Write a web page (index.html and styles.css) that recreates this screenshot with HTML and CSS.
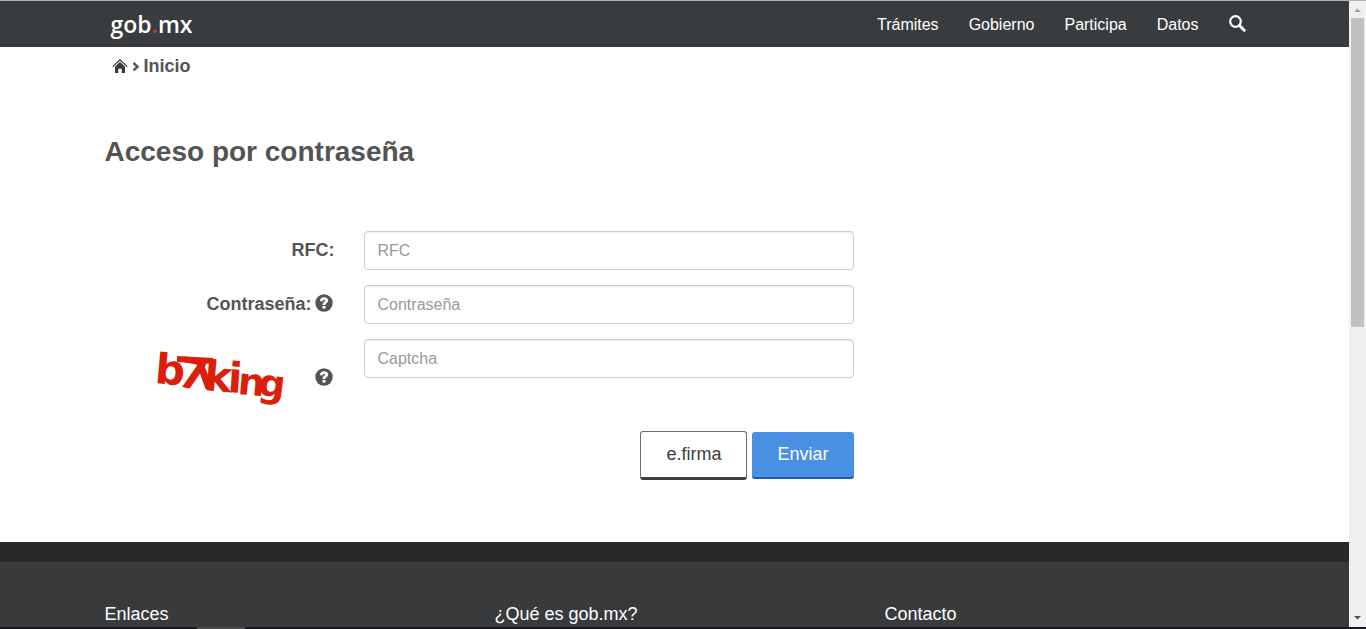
FILE: index.html
```
<!DOCTYPE html>
<html lang="es">
<head>
  <meta charset="UTF-8">
  <meta name="viewport" content="width=device-width, initial-scale=1.0">
  <title>Acceso por contraseña</title>
  <link rel="stylesheet" href="styles.css">
</head>
<body>
  <svg class="sprite">
    <symbol id="icon-help" viewBox="0 0 18 18">
      <circle cx="9" cy="9" r="8.700" fill="#545454"/>
      <path d="M5 7.200C5 4.600 6.600 3.300 9.100 3.300c2.400 0 4.100 1.300 4.100 3.300 0 2.500-2.700 2.600-2.700 4.300H7.500c0-2.600 2.400-2.900 2.400-4.200 0-.6-.4-.9-1-.9-.7 0-1 .5-1 1.400z" fill="#fff"/>
      <path d="M7.500 12h3v2.600h-3z" fill="#fff"/>
    </symbol>
  </svg>

  <div class="window">
    <div class="page">
      <header class="topbar">
        <div class="container topbar-inner">
          <a class="logo" href="#">gob<span class="logo-dot">.</span>mx</a>
          <nav class="topnav">
            <a href="#">Trámites</a>
            <a href="#">Gobierno</a>
            <a href="#">Participa</a>
            <a href="#">Datos</a>
            <a class="search" href="#" aria-label="Buscar">
              <svg width="17" height="17" viewBox="0 0 17 17">
                <circle cx="6.500" cy="6.500" r="5.300" fill="none" stroke="#fff" stroke-width="2.200"/>
                <path d="M10.500 10.500l4.700 4.700" stroke="#fff" stroke-width="3" stroke-linecap="round"/>
              </svg>
            </a>
          </nav>
        </div>
      </header>

      <main class="container content">
        <div class="breadcrumb">
          <a href="#" aria-label="Portada">
            <svg width="16" height="15" viewBox="0 0 16 15">
              <path d="M.8 7.600L8 .9l7.200 6.700" fill="none" stroke="#393c3e" stroke-width="1.200"/>
              <path d="M8 2.800l5 4.900V14h-3.300v-4.200H6.300V14H3V7.700z" fill="#393c3e"/>
            </svg>
          </a>
          <svg width="8" height="10" viewBox="0 0 8 10">
            <path d="M1.500 2L5.500 5.700 1.500 9.400" fill="none" stroke="#545454" stroke-width="2.400"/>
          </svg>
          <a href="#">Inicio</a>
        </div>

        <h1>Acceso por contraseña</h1>

        <form class="login">
          <div class="form-group">
            <div class="label-col"><label for="rfc">RFC:</label></div>
            <input id="rfc" type="text" placeholder="RFC">
          </div>
          <div class="form-group">
            <div class="label-col">
              <label for="password">Contraseña:</label>
              <svg class="help"><use href="#icon-help"/></svg>
            </div>
            <input id="password" type="password" placeholder="Contraseña">
          </div>
          <div class="form-group captcha-group">
            <div class="label-col captcha-col">
              <label for="captcha" aria-label="Captcha">
                <svg class="captcha" viewBox="0 4 150 70">
                  <text x="9 31 58 82 92 112" y="43 46 50 52 54 55" rotate="5 10 5 4 5 7"><tspan class="tall">b7ki</tspan>ng</text>
                  <!-- trazos que unen el 7 con la k -->
                  <path d="M32 19L68 21" stroke="#dc1f0c" stroke-width="6"/>
                  <path d="M54 21L64 48" stroke="#dc1f0c" stroke-width="7"/>
                </svg>
              </label>
              <svg class="help"><use href="#icon-help"/></svg>
            </div>
            <input id="captcha" type="text" placeholder="Captcha">
          </div>
          <div class="actions">
            <button class="btn btn-default" type="button">e.firma</button>
            <button class="btn btn-primary" type="submit">Enviar</button>
          </div>
        </form>
      </main>

      <footer class="footer">
        <div class="container footer-inner">
          <h2>Enlaces</h2>
          <h2>¿Qué es gob.mx?</h2>
          <h2>Contacto</h2>
        </div>
      </footer>
    </div>

    <div class="scrollbar">
      <svg width="17" height="17" viewBox="0 0 17 17"><path d="M5 11h7L8.500 7.500z" fill="#a3a3a3"/></svg>
      <div class="scrollbar-thumb"></div>
      <div class="scrollbar-rest"></div>
      <svg width="17" height="17" viewBox="0 0 17 17"><path d="M5 6h7L8.500 9.500z" fill="#505050"/></svg>
    </div>
  </div>
  <div class="taskbar"><div class="taskbar-item"></div></div>
</body>
</html>
```
FILE: styles.css
```
* {
  box-sizing: border-box;
}

body {
  margin: 0;
  height: 100vh;
  display: flex;
  flex-direction: column;
  overflow: hidden;
  border-top: 1px solid #b0b2b3;
  background: #fff;
  color: #545454;
  font-family: Arial, "Liberation Sans", sans-serif;
  font-size: 18px;
}

a {
  color: inherit;
  text-decoration: none;
}

svg {
  display: block;
}

.sprite {
  display: none;
}

.window {
  flex: 1;
  min-height: 0;
  display: flex;
}

.page {
  flex: 1;
  overflow: hidden;
}

.container {
  max-width: 1170px;
  margin: 0 auto;
  padding: 0 15px;
}

/* barra superior */
.topbar {
  background: #393c3e;
  color: #fff;
}

.topbar-inner {
  height: 46px;
  display: flex;
  justify-content: space-between;
  align-items: center;
  padding-right: 14px;
}

.logo {
  padding-left: 6px;
  font-family: "Open Sans", sans-serif;
  font-size: 23px;
  font-weight: 600;
  line-height: 46px;
}

.logo-dot {
  color: #e0301e;
}

.topnav {
  display: flex;
  align-items: center;
  gap: 30px;
  font-size: 16px;
  line-height: 20px;
  padding-top: 1px;
}

.search {
  padding-bottom: 2px;
}

/* contenido */
.breadcrumb {
  display: flex;
  align-items: center;
  gap: 4px;
  padding: 8px 7px 0;
  font-weight: bold;
  line-height: 22px;
}

h1 {
  margin: 58px 0 62px;
  font-size: 28px;
  line-height: 34px;
}

.login {
  max-width: 749px;
}

.form-group {
  display: flex;
  gap: 29px;
  margin-bottom: 15px;
}

.label-col {
  flex: 0 0 230px;
  height: 39px;
  display: flex;
  justify-content: flex-end;
  align-items: center;
  gap: 3px;
  font-weight: bold;
}

.label-col .help {
  width: 18px;
  height: 18px;
  margin-right: 2px;
  margin-bottom: 4px;
}

.form-group input {
  flex: 1;
  min-width: 0;
  height: 39px;
  padding: 6px 13px;
  border: 1px solid #ccc;
  border-radius: 4px;
  box-shadow: inset 0 1px 1px rgba(0, 0, 0, 0.08);
  font-family: inherit;
  font-size: 16px;
}

.form-group input::placeholder {
  color: #999;
}

.captcha-group {
  margin-bottom: 12px;
}

.captcha-col {
  height: 80px;
  gap: 20px;
}

.captcha {
  width: 150px;
  height: 70px;
  fill: #dc1f0c;
  font-family: Verdana, "DejaVu Sans", sans-serif;
  font-size: 38px;
  font-weight: bold;
}

.captcha .tall {
  font-size: 42px;
}

.actions {
  display: flex;
  justify-content: flex-end;
  align-items: center;
  gap: 5px;
}

.btn {
  padding: 0 25px;
  border-radius: 3px;
  font-family: inherit;
  font-size: 18px;
}

.btn-default {
  height: 49px;
  border: 1px solid #6b6b6b;
  border-bottom: 3px solid #404041;
  background: #fff;
  color: #393c3e;
}

.btn-primary {
  height: 47px;
  border: 0;
  border-bottom: 2px solid #1c5cad;
  background: #4a90e2;
  color: #fff;
}

/* pie */
.footer {
  margin-top: 62px;
  height: 300px;
  border-top: 20px solid #28292a;
  background: #393a3b;
  color: #fff;
}

.footer-inner {
  display: flex;
  gap: 30px;
  padding-top: 41px;
}

.footer h2 {
  flex: 1;
  margin: 0;
  font-size: 18px;
  font-weight: normal;
  line-height: 22px;
}

/* barra de desplazamiento */
.scrollbar {
  width: 17px;
  display: flex;
  flex-direction: column;
  background: #f0f0f0;
}

.scrollbar-thumb {
  flex: 12;
  margin: 0 2px;
  background: #c1c1c1;
}

.scrollbar-rest {
  flex: 11;
}

.taskbar {
  height: 2px;
  background: #16181c;
}

.taskbar-item {
  width: 48px;
  height: 2px;
  margin-left: 197px;
  background: #4a4b4d;
}
```
